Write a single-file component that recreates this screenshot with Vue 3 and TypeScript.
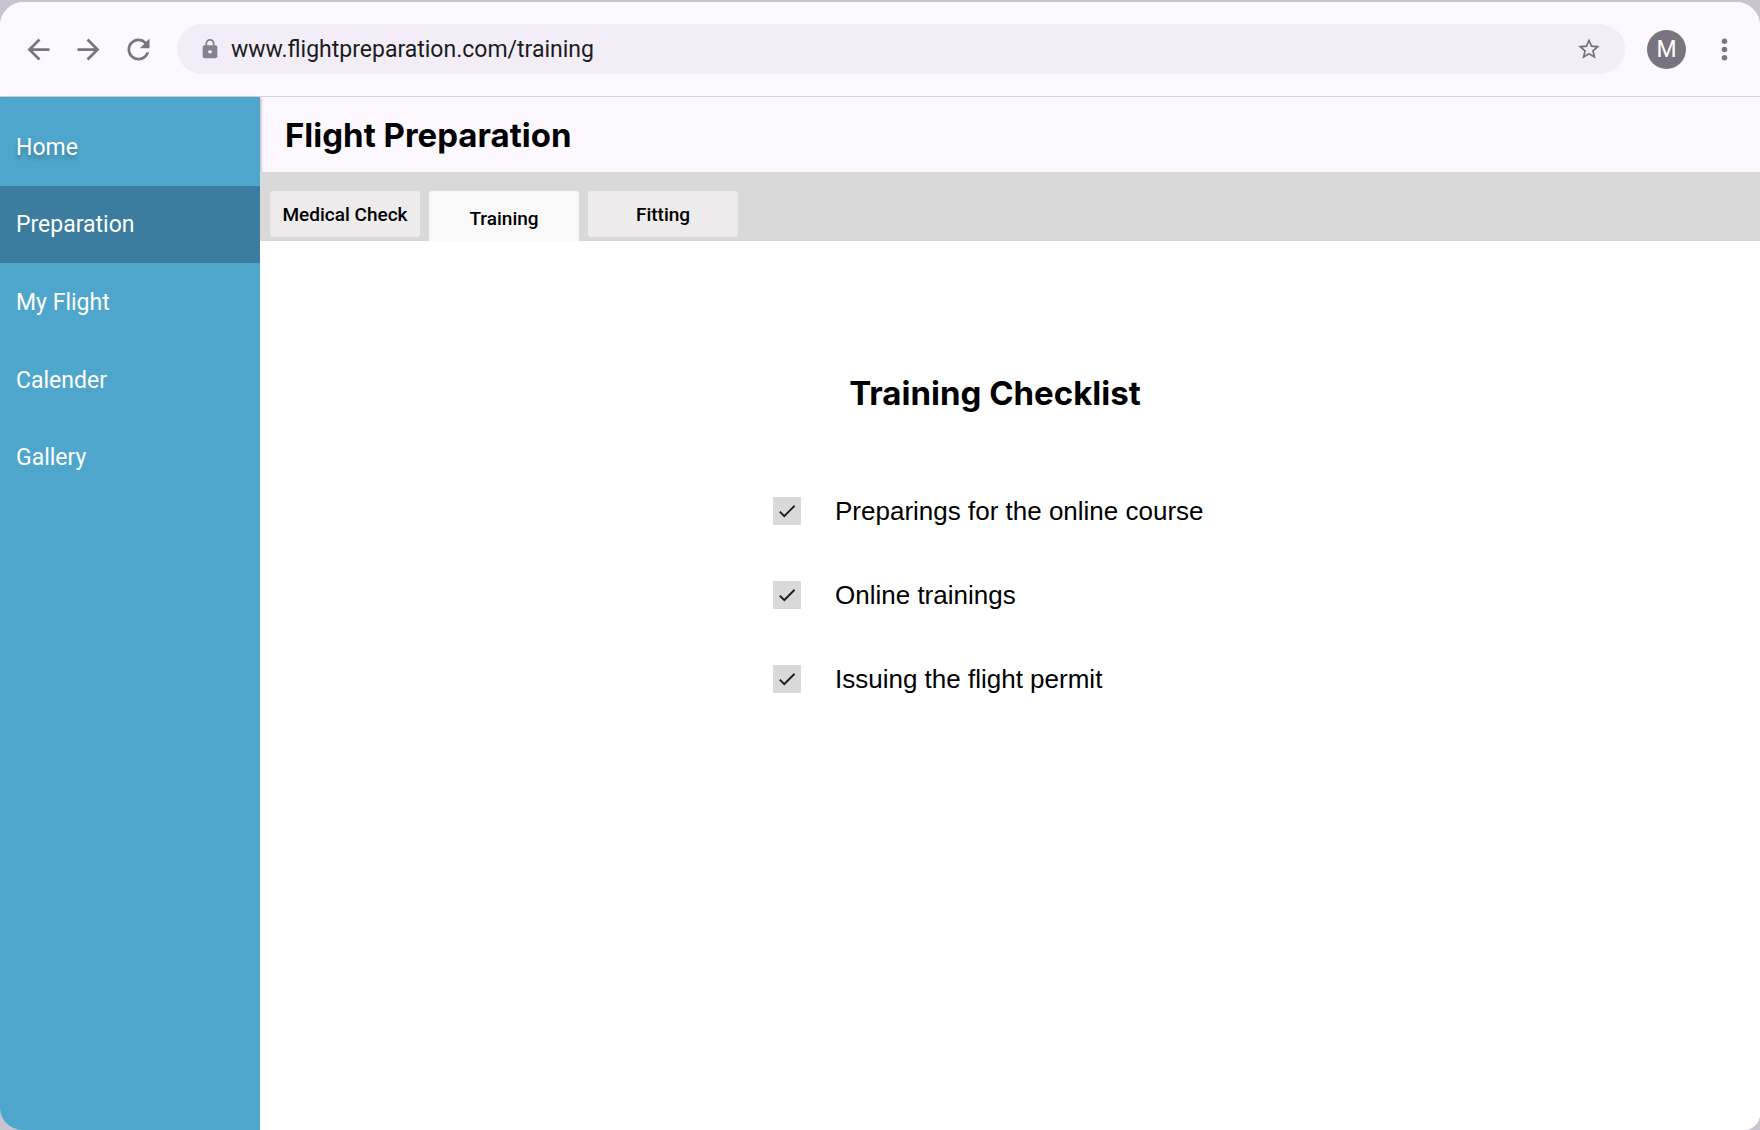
<script setup lang="ts">
import { ref } from 'vue'

interface Task {
  id: string
  label: string
  done: boolean
}

const pages = ['Home', 'Preparation', 'My Flight', 'Calender', 'Gallery']
const tabs = ['Medical Check', 'Training', 'Fitting']

const address = ref('www.flightpreparation.com/training')
const currentPage = ref('Preparation')
const currentTab = ref('Training')
const tasks = ref<Task[]>([
  { id: 'course', label: 'Preparings for the online course', done: true },
  { id: 'trainings', label: 'Online trainings', done: true },
  { id: 'permit', label: 'Issuing the flight permit', done: true },
])
</script>

<template>
  <div class="window">
    <header class="toolbar">
      <div class="history">
        <button type="button" class="icon-button" aria-label="Back">
          <svg viewBox="0 0 24 24"><path d="M20 11H7.83l5.59-5.59L12 4l-8 8 8 8 1.41-1.41L7.83 13H20v-2z" /></svg>
        </button>
        <button type="button" class="icon-button" aria-label="Forward">
          <svg viewBox="0 0 24 24"><path d="M12 4l-1.41 1.41L16.17 11H4v2h12.17l-5.58 5.59L12 20l8-8z" /></svg>
        </button>
        <button type="button" class="icon-button" aria-label="Reload">
          <svg viewBox="0 0 24 24"><path d="M17.65 6.35C16.2 4.9 14.21 4 12 4c-4.42 0-7.99 3.58-7.99 8s3.57 8 7.99 8c3.73 0 6.84-2.55 7.73-6h-2.08c-.82 2.33-3.04 4-5.65 4-3.31 0-6-2.69-6-6s2.69-6 6-6c1.66 0 3.14.69 4.22 1.78L13 11h7V4l-2.35 2.35z" /></svg>
        </button>
      </div>
      <div class="address">
        <svg class="lock" viewBox="0 0 24 24" aria-hidden="true"><path d="M18 8h-1V6c0-2.76-2.24-5-5-5S7 3.24 7 6v2H6c-1.1 0-2 .9-2 2v10c0 1.1.9 2 2 2h12c1.1 0 2-.9 2-2V10c0-1.1-.9-2-2-2zm-6 9c-1.1 0-2-.9-2-2s.9-2 2-2 2 .9 2 2-.9 2-2 2zm3.100-9H8.900V6c0-1.710 1.390-3.100 3.100-3.100 1.710 0 3.100 1.390 3.100 3.100v2z" /></svg>
        <input v-model="address" type="text" class="address-input" aria-label="Address" spellcheck="false" />
        <button type="button" class="star" aria-label="Bookmark this page">
          <svg viewBox="0 0 24 24"><path d="M22 9.240l-7.190-.620L12 2 9.190 8.630 2 9.240l5.460 4.730L5.820 21 12 17.270 18.180 21l-1.630-7.030L22 9.240zM12 15.400l-3.760 2.270 1-4.280-3.320-2.880 4.380-.380L12 6.100l1.710 4.040 4.380.380-3.320 2.880 1 4.280L12 15.400z" /></svg>
        </button>
      </div>
      <button type="button" class="avatar" aria-label="Profile M">M</button>
      <button type="button" class="icon-button" aria-label="Menu">
        <svg viewBox="0 0 24 24"><circle cx="12" cy="6" r="2" /><circle cx="12" cy="12" r="2" /><circle cx="12" cy="18" r="2" /></svg>
      </button>
    </header>

    <div class="body">
      <nav class="sidebar" aria-label="Main">
        <ul class="menu">
          <li v-for="page in pages" :key="page">
            <a
              href="#"
              class="menu-link"
              :class="{ active: page === currentPage, raised: page === 'Home' }"
              @click.prevent="currentPage = page"
            >{{ page }}</a>
          </li>
        </ul>
      </nav>

      <main class="main">
        <h1 class="title">Flight Preparation</h1>
        <div class="tabs" role="tablist">
          <button
            v-for="tab in tabs"
            :key="tab"
            type="button"
            role="tab"
            class="tab"
            :class="{ selected: tab === currentTab }"
            :aria-selected="tab === currentTab"
            @click="currentTab = tab"
          >{{ tab }}</button>
        </div>
        <section class="panel">
          <h2 class="panel-title">Training Checklist</h2>
          <ul class="tasks">
            <li v-for="task in tasks" :key="task.id" class="task">
              <span class="check">
                <input :id="task.id" v-model="task.done" type="checkbox" class="check-input" />
                <svg v-if="task.done" class="check-mark" viewBox="0 0 24 24" aria-hidden="true"><path d="M9 16.170L4.830 12l-1.420 1.410L9 19 21 7l-1.410-1.410z" /></svg>
              </span>
              <label :for="task.id">{{ task.label }}</label>
            </li>
          </ul>
        </section>
      </main>
    </div>
  </div>
</template>

<style>
body {
  margin: 0;
  background: #cac4d0;
}
</style>

<style scoped>
.window {
  display: flex;
  flex-direction: column;
  box-sizing: border-box;
  min-height: calc(100vh - 2px);
  margin-top: 2px;
  border-radius: 24px 24px 16px 22px;
  overflow: hidden;
  background: #fff;
  font-family: Roboto, sans-serif;
}

button {
  padding: 0;
  border: 0;
  background: none;
  font-family: inherit;
  cursor: pointer;
}

svg {
  display: block;
  width: 100%;
  height: 100%;
  fill: currentColor;
}

ul {
  margin: 0;
  padding: 0;
  list-style: none;
}

.toolbar {
  display: flex;
  align-items: center;
  gap: 22px;
  height: 94px;
  padding: 0 19px 0 22px;
  border-bottom: 1px solid #d9d5dc;
  background: #fdf8ff;
  color: #79747e;
}

.history {
  display: flex;
  gap: 17px;
}

.icon-button {
  width: 33px;
  height: 33px;
  color: inherit;
}

.address {
  display: flex;
  flex: 1;
  align-items: center;
  box-sizing: border-box;
  height: 50px;
  padding: 0 23px 0 22px;
  border-radius: 25px;
  background: #f2edf7;
}

.lock {
  width: 22px;
  height: 22px;
  margin-right: 10px;
  color: #87828d;
}

.address-input {
  flex: 1;
  min-width: 0;
  padding: 2px 0 0;
  border: 0;
  outline: 0;
  background: none;
  color: #1d1b20;
  font-family: inherit;
  font-size: 23px;
  line-height: 32px;
}

.star {
  width: 26px;
  height: 26px;
  color: #79747e;
}

.avatar {
  width: 39px;
  height: 39px;
  border-radius: 50%;
  background: #79747e;
  color: #fff;
  font-size: 23px;
  line-height: 39px;
}

.body {
  display: flex;
  flex: 1;
}

.sidebar {
  z-index: 1;
  flex: none;
  width: 260px;
  box-shadow: 1px 1px 3px rgba(0, 0, 0, 0.3);
  background: #4fa6cc;
}

.menu {
  display: flex;
  flex-direction: column;
  height: 388px;
  padding-top: 11px;
}

.menu li {
  display: flex;
  flex: 1;
}

.menu-link {
  display: flex;
  flex: 1;
  align-items: center;
  padding: 2px 16px 0;
  color: #fff;
  font-size: 23px;
  line-height: 32px;
  text-decoration: none;
}

.menu-link.active {
  background: #3b7c9f;
}

.menu-link.raised {
  text-shadow: 0 4px 4px rgba(0, 0, 0, 0.25);
}

.main {
  display: flex;
  flex: 1;
  flex-direction: column;
  min-width: 0;
}

.title {
  margin: 0;
  padding: 18px 25px 17px;
  background: #fdf8ff;
  color: #000;
  font-family: Inter, sans-serif;
  font-size: 33px;
  font-weight: 700;
  line-height: 40px;
}

.tabs {
  position: relative;
  z-index: 2;
  display: flex;
  align-items: flex-start;
  gap: 9px;
  height: 50px;
  padding: 19px 10px 0;
  background: #d9d9d9;
}

.tab {
  width: 150px;
  height: 46px;
  border-radius: 3px;
  background: #edebec;
  color: #000;
  font-size: 19px;
  font-weight: 500;
}

.tab.selected {
  height: 50px;
  padding-top: 4px;
  border-radius: 3px 3px 0 0;
  background: #f9f9f9;
}

.panel {
  position: relative;
  z-index: 2;
  display: flex;
  flex: 1;
  flex-direction: column;
  align-items: center;
  padding: 132px 30px 40px 0;
  background: #fff;
  color: #000;
}

.panel-title {
  margin: 0;
  font-family: Inter, sans-serif;
  font-size: 33px;
  font-weight: 700;
  line-height: 40px;
}

.tasks {
  display: flex;
  flex-direction: column;
  gap: 52px;
  width: 444px;
  margin-top: 82px;
}

.task {
  display: flex;
  align-items: center;
  gap: 34px;
  font-family: "Liberation Sans", sans-serif;
  font-size: 26px;
  line-height: 32px;
  white-space: nowrap;
}

.check {
  display: grid;
  place-items: center;
  width: 28px;
  height: 28px;
}

.check-input,
.check-mark {
  grid-area: 1 / 1;
}

.check-input {
  appearance: none;
  width: 28px;
  height: 28px;
  margin: 0;
  background: #d9d9d9;
}

.check-mark {
  z-index: 1;
  width: 22px;
  height: 22px;
  color: #1d1b20;
  pointer-events: none;
}
</style>
